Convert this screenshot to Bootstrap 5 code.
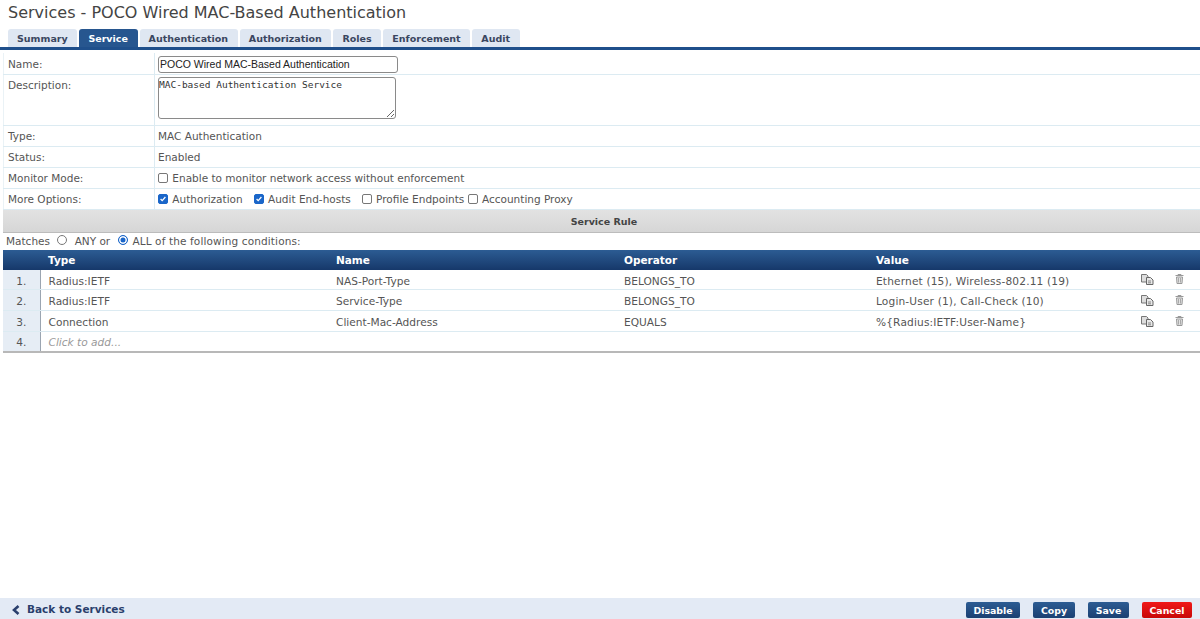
<!DOCTYPE html>
<html lang="en"><head><meta charset="utf-8"><title>Services</title>
<link href="https://cdn.jsdelivr.net/npm/bootstrap@5.3.0/dist/css/bootstrap.min.css" rel="stylesheet">
<style>
html,body{height:100%}
body{font-family:"DejaVu Sans","Liberation Sans",sans-serif;font-size:10.5px;color:#333;background:#fff;overflow:hidden}
.page-wrap{height:619px}
.page-title{font-size:16px;font-weight:400;color:#444;margin:0;padding:4px 8px 0;height:28px;line-height:18px}
.tab-strip{border-bottom:3px solid #1f4f8b;padding-left:8px;gap:2px;height:22px}
.tab-item{height:18px;line-height:19px;padding:0 9.700px 0 9px;background:#dfe7f2;color:#3a4660;font-weight:700;font-size:9.5px;border-radius:3px 3px 0 0}
.tab-item.is-on{background:#27568f;color:#fff}
.form-grid{margin:3px 0 0 3px;width:calc(100% - 3px);border-collapse:collapse}
.form-grid td{border-bottom:1px solid #dcebf2;padding:3px 5px 0 5px;height:21px;vertical-align:middle;color:#555}
.form-grid td:first-child{width:151px;border-right:1px solid #dcebf2;border-left:1px solid #eaf2f6;padding-left:4px}
.form-grid tr.tall td{height:51px;vertical-align:top;padding-top:3px}
.form-grid tr.tall td:last-child{padding-top:4px}
.form-grid td:last-child{padding-left:3px}
.form-grid tr.field-row td:first-child{padding-top:4px}
.form-grid tr.field-row td:last-child{padding-top:2px}
.name-input{width:240px;height:17px;border:1px solid #8a8a8a;border-radius:3px;font-family:"Liberation Sans",sans-serif;font-size:10.5px;padding:0 1px;color:#222;display:block}
.desc-input{width:238px;height:42px;border:1px solid #8a8a8a;border-radius:3px;font-family:"DejaVu Sans Mono",monospace;font-size:9.5px;padding:0;color:#333;display:block;margin-top:-2px}
.cb{appearance:none;width:10px;height:10px;border:1px solid #777;border-radius:2px;background:#fff;margin:0 1px 0 0;vertical-align:-1px;display:inline-block}
.cb:checked{background:#1a66c9 url("data:image/svg+xml,%3Csvg xmlns='http://www.w3.org/2000/svg' viewBox='0 0 10 10'%3E%3Cpath d='M2 5l2 2 4-4.500' fill='none' stroke='%23fff' stroke-width='1.600'/%3E%3C/svg%3E") center/100% no-repeat;border-color:#1a66c9}
.rd{appearance:none;width:10px;height:10px;border:1px solid #777;border-radius:50%;background:#fff;vertical-align:0;display:inline-block}
.rd-a{margin:0 4.500px 0 3.500px}
.rd-b{margin:0 1px 0 4.500px}
.rd:checked{border-color:#1a66c9;box-shadow:inset 0 0 0 1.500px #fff;background:#1a66c9}
.opt-gap{margin-right:11px}
.rule-head{margin-left:3px;padding-left:5px;height:23px;line-height:23px;background:linear-gradient(#e2e2e2,#d6d6d6);border-bottom:1px solid #bcbcbc;text-align:center;font-weight:700;font-size:9.5px;color:#444}
.match-line{margin-left:3px;padding-left:3px;height:17px;line-height:17px;color:#555}
.match-tail{letter-spacing:.012em}
.rule-grid{margin-left:3px;width:calc(100% - 3px);border-collapse:collapse;table-layout:fixed;border-bottom:2px solid #b8b8b8}
.rule-grid th{height:20px;padding:2px 8px 0;background:linear-gradient(#2c5c93,#16386a);color:#fff;font-size:10.5px;font-weight:700;text-align:left}
.rule-grid td{height:20px;padding:4px 8px 0;border-bottom:1px solid #dcebf2;color:#555;white-space:nowrap;font-size:10.6px}
.rule-grid tr.tall-row td{height:21px}
.rule-grid tr:last-child td{border-bottom:0;padding-top:3px}
.rule-grid td.num{background:#e6edf5;border-right:1px solid #9ba5b1;text-align:center;padding:4px 0 0}
.rule-grid td.ico{padding:0;text-align:center}
.rule-grid td.val-col{letter-spacing:.015em}
.ico svg{display:block;margin:0 auto}
.rule-grid td.add-hint{color:#999;font-style:italic}
.foot-bar{height:21px;background:#e3eaf5;padding:0 8px 0 12px}
.back-link{font-weight:700;color:#2a3f6d;font-size:10.5px;text-decoration:none;padding-top:2px;column-gap:7px}
.act-btns{column-gap:13px}
.act-btn{height:16px;line-height:17px;padding:0;border:0;border-radius:2px;color:#fff;font-weight:700;font-size:9.4px;text-align:center;background:linear-gradient(#2c5c93,#1b4072);font-family:inherit;margin-top:4px}
.act-btn.stop{background:linear-gradient(#f01818,#c80808)}
.w-dis{width:54px}.w-cpy{width:42px}.w-sav{width:41px}.w-can{width:50px}
</style></head>
<body>
<div class="page-wrap d-flex flex-column">
<h1 class="page-title">Services - POCO Wired MAC-Based Authentication</h1>
<div class="tab-strip d-flex align-items-end">
<div class="tab-item">Summary</div><div class="tab-item is-on">Service</div><div class="tab-item">Authentication</div><div class="tab-item">Authorization</div><div class="tab-item">Roles</div><div class="tab-item">Enforcement</div><div class="tab-item">Audit</div>
</div>
<table class="form-grid">
<tr class="field-row"><td>Name:</td><td><input class="name-input" value="POCO Wired MAC-Based Authentication"></td></tr>
<tr class="tall"><td>Description:</td><td><textarea class="desc-input">MAC-based Authentication Service</textarea></td></tr>
<tr><td>Type:</td><td>MAC Authentication</td></tr>
<tr><td>Status:</td><td>Enabled</td></tr>
<tr><td>Monitor Mode:</td><td><input type="checkbox" class="cb"> Enable to monitor network access without enforcement</td></tr>
<tr><td>More Options:</td><td><input type="checkbox" class="cb" checked> <span class="opt-gap">Authorization</span><input type="checkbox" class="cb" checked> <span class="opt-gap">Audit End-hosts</span><input type="checkbox" class="cb"> Profile Endpoints <input type="checkbox" class="cb"> Accounting Proxy</td></tr>
</table>
<div class="rule-head">Service Rule</div>
<div class="match-line">Matches <input type="radio" name="m" class="rd rd-a"> ANY or <input type="radio" name="m" class="rd rd-b" checked> <span class="match-tail">ALL of the following conditions:</span></div>
<table class="rule-grid">
<colgroup><col style="width:37px"><col style="width:288px"><col style="width:288px"><col style="width:252px"><col><col style="width:22px"><col style="width:42px"></colgroup>
<tr><th></th><th>Type</th><th>Name</th><th>Operator</th><th>Value</th><th></th><th></th></tr>
<tr><td class="num">1.</td><td>Radius:IETF</td><td>NAS-Port-Type</td><td>BELONGS_TO</td><td class="val-col">Ethernet (15), Wireless-802.11 (19)</td>
<td class="ico"><svg width="13" height="11" viewBox="0 0 13 11"><path d="M.5.500h5l1.500 1.500v6h-6.500z" fill="#ddd" stroke="#777"/><path d="M5.500 3.500h4l2.500 2.500v4.500h-6.500z" fill="#e8e8e8" stroke="#666"/><path d="M7 7h3M7 8.800h3" stroke="#888"/></svg></td>
<td class="ico"><svg width="9" height="10" viewBox="0 0 9 10"><path d="M.5 1.500h8M3 1.500V.5h3v1" fill="none" stroke="#999"/><path d="M1.500 3h6l-.5 6.500H2z" fill="#e2e2e2" stroke="#999"/><path d="M3.500 4v4.500M5.500 4v4.500" stroke="#aaa"/></svg></td></tr>
<tr class="tall-row"><td class="num">2.</td><td>Radius:IETF</td><td>Service-Type</td><td>BELONGS_TO</td><td class="val-col">Login-User (1), Call-Check (10)</td>
<td class="ico"><svg width="13" height="11" viewBox="0 0 13 11"><path d="M.5.500h5l1.500 1.500v6h-6.500z" fill="#ddd" stroke="#777"/><path d="M5.500 3.500h4l2.500 2.500v4.500h-6.500z" fill="#e8e8e8" stroke="#666"/><path d="M7 7h3M7 8.800h3" stroke="#888"/></svg></td>
<td class="ico"><svg width="9" height="10" viewBox="0 0 9 10"><path d="M.5 1.500h8M3 1.500V.5h3v1" fill="none" stroke="#999"/><path d="M1.500 3h6l-.5 6.500H2z" fill="#e2e2e2" stroke="#999"/><path d="M3.500 4v4.500M5.500 4v4.500" stroke="#aaa"/></svg></td></tr>
<tr><td class="num">3.</td><td>Connection</td><td>Client-Mac-Address</td><td>EQUALS</td><td class="val-col">%{Radius:IETF:User-Name}</td>
<td class="ico"><svg width="13" height="11" viewBox="0 0 13 11"><path d="M.5.500h5l1.500 1.500v6h-6.500z" fill="#ddd" stroke="#777"/><path d="M5.500 3.500h4l2.500 2.500v4.500h-6.500z" fill="#e8e8e8" stroke="#666"/><path d="M7 7h3M7 8.800h3" stroke="#888"/></svg></td>
<td class="ico"><svg width="9" height="10" viewBox="0 0 9 10"><path d="M.5 1.500h8M3 1.500V.5h3v1" fill="none" stroke="#999"/><path d="M1.500 3h6l-.5 6.500H2z" fill="#e2e2e2" stroke="#999"/><path d="M3.500 4v4.500M5.500 4v4.500" stroke="#aaa"/></svg></td></tr>
<tr><td class="num">4.</td><td class="add-hint">Click to add...</td><td></td><td></td><td></td><td></td><td></td></tr>
</table>
<div class="foot-bar mt-auto d-flex justify-content-between">
<a class="back-link d-flex align-items-center" href="#"><svg width="8" height="10" viewBox="0 0 8 10"><path d="M6.500 1 2 5l4.500 4" fill="none" stroke="#2a3f6d" stroke-width="2.600"/></svg>Back to Services</a>
<div class="act-btns d-flex align-items-start">
<button class="act-btn w-dis">Disable</button><button class="act-btn w-cpy">Copy</button><button class="act-btn w-sav">Save</button><button class="act-btn stop w-can">Cancel</button>
</div></div>
</div>
</body></html>
